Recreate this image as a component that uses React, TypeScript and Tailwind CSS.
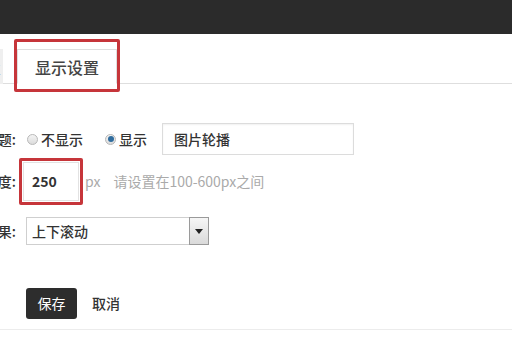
import * as React from "react";

const font = { fontFamily: '"Noto Sans CJK SC", "Noto Sans", sans-serif' };

function Radio({ checked }: { checked?: boolean }) {
  return (
    <span className="flex size-[11px] shrink-0 items-center justify-center rounded-full border border-[#b8b8b8] bg-gradient-to-b from-[#f4f4f4] to-[#dcdcdc]">
      {checked && <span className="size-[6px] rounded-full bg-[#2f6c9e]" />}
    </span>
  );
}

export default function App() {
  return (
    <div
      className="relative h-[340px] w-[512px] overflow-hidden bg-white text-[#333]"
      style={font}
    >
      {/* top bar */}
      <div className="h-[34px] bg-[#2b2b2b]" />

      {/* content, shifted left as if cropped */}
      <div className="-ml-[80px]">
        {/* tabs */}
        <div className="mt-[15px] flex h-[35px] items-start border-b border-[#dedede]">
          <div className="flex h-[35px] w-[83px] items-center justify-end bg-[#efefef] pr-[2px] text-[16px] text-[#999]">
            基本设置
          </div>
          <div className="-mt-[10px] ml-[11px] rounded-[2px] border-[3px] border-[#c6353a] px-0 pt-[7px] pb-[5px]">
            <div className="flex h-[35px] w-[100px] items-center justify-center border border-b-white border-[#dedede] bg-white text-[16px] font-medium text-[#444]">
              显示设置
            </div>
          </div>
        </div>

        {/* row 1 */}
        <div className="mt-[39px] flex h-[32px] items-center text-[14px] font-medium">
          <span className="w-[96px] text-right">标题:</span>
          <span className="ml-[11px] flex items-center gap-[3px]">
            <Radio />
            <span>不显示</span>
          </span>
          <span className="ml-[22px] flex items-center gap-[3px]">
            <Radio checked />
            <span>显示</span>
          </span>
          <div className="ml-[15px] flex h-[32px] w-[192px] items-center border border-[#dcdcdc] px-[11px] shadow-[inset_0_1px_2px_rgba(0,0,0,0.06)]">
            图片轮播
          </div>
        </div>

        {/* row 2 */}
        <div className="mt-[3px] flex h-[47px] items-center text-[14px]">
          <span className="w-[96px] text-right font-medium">高度:</span>
          <div className="ml-[3px] rounded-[2px] border-[3px] border-[#c6353a] px-[1px] py-[1px]">
            <div className="flex h-[39px] w-[56px] items-center border border-[#e2e2e2] px-[8px] font-bold text-[#333]">
              250
            </div>
          </div>
          <span className="ml-[2px] text-[#aaa]">px</span>
          <span className="ml-[13px] text-[#aaa]">请设置在100-600px之间</span>
        </div>

        {/* row 3 */}
        <div className="mt-[12px] flex h-[28px] items-center text-[14px] font-medium">
          <span className="w-[96px] text-right">效果:</span>
          <div className="ml-[10px] flex h-[28px] w-[183px] items-center justify-between border border-[#cfcfcf] pl-[5px]">
            <span>上下滚动</span>
            <span className="mr-[-1px] flex h-[28px] w-[20px] items-center justify-center border border-[#9a9a9a] bg-gradient-to-b from-[#f6f6f6] to-[#dadada]">
              <span className="h-0 w-0 border-x-[4px] border-t-[5px] border-x-transparent border-t-[#222]" />
            </span>
          </div>
        </div>

        {/* buttons */}
        <div className="mt-[43px] flex items-center text-[14px]">
          <span className="w-[96px]" />
          <button className="ml-[10px] flex h-[31px] w-[51px] items-center justify-center rounded-[3px] bg-[#2d2d2d] text-white">
            保存
          </button>
          <span className="ml-[15px] font-medium">取消</span>
        </div>
      </div>

      <div className="mt-[10px] border-b border-[#ececec]" />
    </div>
  );
}
